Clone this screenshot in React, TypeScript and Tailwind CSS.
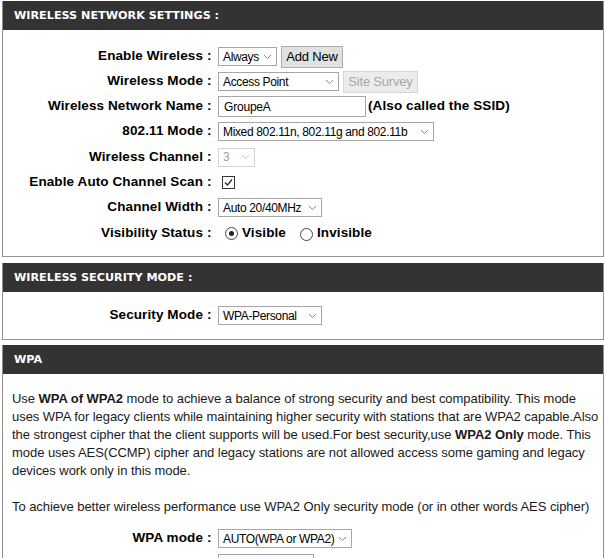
import React from "react";

const head = { fontFamily: '"DejaVu Sans", Verdana, sans-serif' };
const body = { fontFamily: '"Liberation Sans", Arial, sans-serif' };

const Chevron = ({ faded }: { faded?: boolean }) => (
  <svg width="9" height="6" viewBox="0 0 9 6" className="shrink-0">
    <polyline points="1,1 4.5,4.5 8,1" fill="none" stroke={faded ? "#c8c8c8" : "#8a8a8a"} strokeWidth="1" />
  </svg>
);

const Select = ({ value, width, disabled }: { value: string; width: string; disabled?: boolean }) => (
  <div
    className={`flex h-[19px] items-center justify-between overflow-hidden border pl-[4px] pr-[4px] text-[12px] tracking-[-0.35px] ${width} ${
      disabled ? "border-[#d4d4d4] text-[#a0a0a0]" : "border-[#a6a6a6] text-black"
    } bg-white`}
  >
    <span className="whitespace-nowrap leading-none">{value}</span>
    <Chevron faded={disabled} />
  </div>
);

const Button = ({ children, disabled }: { children: React.ReactNode; disabled?: boolean }) => (
  <div
    className={`flex h-[22px] items-center justify-center whitespace-nowrap border text-[13px] tracking-[-0.2px] ${
      disabled
        ? "w-[75px] border-[#d6d6d6] bg-[#ececec] text-[#a8a8a8]"
        : "w-[62px] border-[#adadad] bg-[#e1e1e1] text-black"
    }`}
  >
    {children}
  </div>
);

const Row = ({ label, children, h = "h-[25px]" }: { label: string; children?: React.ReactNode; h?: string }) => (
  <div className={`flex items-center ${h}`}>
    <div className="w-[200px] whitespace-nowrap text-right text-[13.5px] font-bold tracking-[0.1px] text-black">
      {label}
    </div>
    <div className="w-[15px] pl-[4px] text-[13.5px] font-bold">{label ? ":" : ""}</div>
    <div className="flex items-center gap-[4px]">{children}</div>
  </div>
);

const Section = ({ title, children }: { title: string; children: React.ReactNode }) => (
  <div className="ml-[2px] w-[602px] border-x border-b border-[#909090]">
    <div
      className="flex h-[29px] items-center bg-[#333333] pl-[11px] pt-[2px] text-[11.2px] font-bold text-white"
      style={head}
    >
      {title}
    </div>
    {children}
  </div>
);

const Radio = ({ checked }: { checked?: boolean }) => (
  <span className="flex h-[13px] w-[13px] items-center justify-center rounded-full border border-[#444] bg-white">
    {checked && <span className="h-[5px] w-[5px] rounded-full bg-[#222]" />}
  </span>
);

export default function App() {
  return (
    <div className="h-[558px] w-[605px] overflow-hidden bg-white pt-[1px]" style={body}>
      <Section title="WIRELESS NETWORK SETTINGS :">
        <div className="pb-[10px] pt-[14px]">
          <Row label="Enable Wireless">
            <Select value="Always" width="w-[59px]" />
            <Button>Add New</Button>
          </Row>
          <Row label="Wireless Mode">
            <Select value="Access Point" width="w-[121px]" />
            <Button disabled>Site Survey</Button>
          </Row>
          <Row label="Wireless Network Name">
            <div className="flex h-[21px] w-[148px] items-center border border-[#a6a6a6] bg-white pl-[5px] text-[12px] tracking-[-0.2px]">
              GroupeA
            </div>
            <span className="-ml-[2px] whitespace-nowrap text-[13.5px] font-bold tracking-[0.1px]">
              (Also called the SSID)
            </span>
          </Row>
          <Row label="802.11 Mode">
            <Select value="Mixed 802.11n, 802.11g and 802.11b" width="w-[216px]" />
          </Row>
          <Row label="Wireless Channel" h="h-[26px]">
            <Select value="3" width="w-[37px]" disabled />
          </Row>
          <Row label="Enable Auto Channel Scan">
            <span className="ml-[4px] flex h-[13px] w-[13px] items-center justify-center border border-[#333] bg-white">
              <svg width="11" height="11" viewBox="0 0 11 11">
                <polyline points="2,5.5 4.5,8 9,2.5" fill="none" stroke="#222" strokeWidth="1.2" />
              </svg>
            </span>
          </Row>
          <Row label="Channel Width">
            <Select value="Auto 20/40MHz" width="w-[104px]" />
          </Row>
          <Row label="Visibility Status" h="h-[26px]">
            <div className="ml-[7px] flex items-center gap-[4px] text-[13.5px] font-bold tracking-[0.1px]">
              <Radio checked />
              <span>Visible</span>
              <span className="ml-[10px] mt-[3px]">
                <Radio />
              </span>
              <span>Invisible</span>
            </div>
          </Row>
        </div>
      </Section>

      <div className="h-[6px]" />

      <Section title="WIRELESS SECURITY MODE :">
        <div className="flex h-[47px] items-center">
          <Row label="Security Mode">
            <Select value="WPA-Personal" width="w-[104px]" />
          </Row>
        </div>
      </Section>

      <div className="h-[5px]" />

      <Section title="WPA">
        <div className="pb-[10px] pl-[9px] pr-0 pt-[16px] text-[13px] leading-[18px] tracking-[-0.05px] text-[#1a1a1a]">
          <p>
            Use <b>WPA of WPA2</b> mode to achieve a balance of strong security and best compatibility. This mode
            <br />
            uses WPA for legacy clients while maintaining higher security with stations that are WPA2 capable.Also
            <br />
            the strongest cipher that the client supports will be used.For best security,use <b>WPA2 Only</b> mode. This
            <br />
            mode uses AES(CCMP) cipher and legacy stations are not allowed access some gaming and legacy
            <br />
            devices work only in this mode.
          </p>
          <p className="mt-[18px] whitespace-nowrap">
            To achieve better wireless performance use WPA2 Only security mode (or in other words AES cipher)
          </p>
        </div>
        <div>
          <Row label="WPA mode">
            <Select value="AUTO(WPA or WPA2)" width="w-[134px]" />
          </Row>
          <Row label="">
            <Select value="" width="w-[96px]" />
          </Row>
        </div>
      </Section>
    </div>
  );
}
